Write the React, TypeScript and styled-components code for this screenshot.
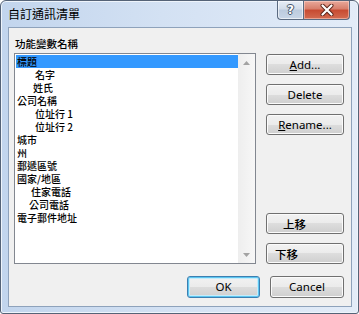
import React from 'react';
import styled, { createGlobalStyle, css } from 'styled-components';

const Global = createGlobalStyle`
  html, body { margin: 0; padding: 0; background: #ffffff; }
  body { width: 359px; height: 314px; overflow: hidden; }
  * { box-sizing: border-box; }
`;

const CJK = `"Noto Sans CJK TC", "Noto Sans", sans-serif`;
const UI = `"Noto Sans", "Noto Sans CJK TC", sans-serif`;

const Window = styled.div`
  width: 359px;
  height: 314px;
  border: 1px solid #556377;
  border-radius: 6px 6px 3px 3px;
  background: linear-gradient(to right, #c2d5ed 0%, #d3e1f3 45%, #e3ecf8 100%);
  display: flex;
  flex-direction: column;
  padding: 0 6px 6px 7px;
  box-shadow: inset 0 0 0 1px #eef4fb;
`;

const TitleBar = styled.div`
  height: 26px;
  display: flex;
  align-items: flex-start;
`;

const Title = styled.div`
  font-family: ${CJK};
  font-size: 12px;
  line-height: 14px;
  color: #000;
  padding: 6px 0 0 0;
  flex: 1;
`;

const CaptionGroup = styled.div`
  display: flex;
  margin-right: 2px;
  height: 19px;
`;

const CaptionButton = styled.div<{ $kind: 'help' | 'close' }>`
  height: 19px;
  display: flex;
  align-items: center;
  justify-content: center;
  border: 1px solid #5a6a80;
  border-top: none;
  ${(p) =>
    p.$kind === 'help'
      ? css`
          width: 26px;
          border-radius: 0 0 0 4px;
          border-right: none;
          background: linear-gradient(#e6edf6 0%, #d2dce9 45%, #bccbde 50%, #c8d6e7 100%);
          box-shadow: inset 0 0 0 1px rgba(255, 255, 255, 0.6);
        `
      : css`
          width: 47px;
          border-radius: 0 0 4px 0;
          background: linear-gradient(#e9a99b 0%, #d77d6a 45%, #c74a31 50%, #d36b50 100%);
          box-shadow: inset 0 0 0 1px rgba(255, 220, 210, 0.5);
        `}
`;

const HelpGlyph = styled.span`
  font-family: "DejaVu Sans", sans-serif;
  font-weight: bold;
  font-size: 12px;
  line-height: 12px;
  color: #ffffff;
  text-shadow: 0 0 1px #36465c, 1px 0 0 #4a5a70, -1px 0 0 #4a5a70, 0 1px 0 #4a5a70, 0 -1px 0 #4a5a70;
`;

const Client = styled.div`
  flex: 1;
  background: #f0f0f0;
  border: 1px solid #8ea2bb;
  display: flex;
  flex-direction: column;
`;

const FieldLabel = styled.div`
  font-family: ${CJK};
  font-size: 10.5px;
  font-weight: 500;
  line-height: 12px;
  color: #000;
  margin: 10px 0 3px 6px;
`;

const MainRow = styled.div`
  display: flex;
  gap: 10px;
  height: 211px;
  padding-left: 5px;
`;

const ListBox = styled.div`
  width: 242px;
  height: 211px;
  border: 1px solid #828790;
  background: #ffffff;
  display: flex;
`;

const Items = styled.div`
  flex: 1;
  padding: 1px 0 0 1px;
  display: flex;
  flex-direction: column;
`;

const Row = styled.div<{ $indent: number; $selected?: boolean }>`
  height: 13px;
  line-height: 13px;
  font-family: ${CJK};
  font-size: 10px;
  font-weight: 500;
  color: #000;
  padding-left: ${(p) => p.$indent}px;
  white-space: pre;
  overflow: hidden;
  background: ${(p) => (p.$selected ? '#3399ff' : 'transparent')};
`;

const ScrollBar = styled.div`
  width: 17px;
  background: linear-gradient(to right, #eeeeee, #f7f7f7);
  display: flex;
  flex-direction: column;
  justify-content: space-between;
`;

const ScrollArrow = styled.div`
  height: 17px;
  display: flex;
  align-items: center;
  justify-content: center;
`;

const ButtonColumn = styled.div`
  width: 78px;
  display: flex;
  flex-direction: column;
  justify-content: space-between;
`;

const ButtonGroup = styled.div<{ $top?: boolean }>`
  display: flex;
  flex-direction: column;
  gap: 9px;
  margin-top: ${(p) => (p.$top ? '1px' : '0')};
`;

const Button = styled.div<{ $pad?: number; $default?: boolean; $w?: number; $h?: number }>`
  width: ${(p) => (p.$w ? `${p.$w}px` : '100%')};
  height: ${(p) => p.$h ?? 21}px;
  border: 1px solid ${(p) => (p.$default ? '#3c7fb1' : '#707070')};
  border-radius: 3px;
  background: linear-gradient(#f2f2f2 0%, #ebebeb 50%, #dddddd 50%, #cfcfcf 100%);
  box-shadow: ${(p) =>
    p.$default ? 'inset 0 0 0 1px #5dc6f0, inset 0 0 0 2px #c5ecfb' : 'inset 0 0 0 1px #fbfbfb'};
  display: flex;
  align-items: center;
  justify-content: ${(p) => (p.$pad !== undefined ? 'flex-start' : 'center')};
  padding-left: ${(p) => p.$pad ?? 0}px;
  font-family: ${UI};
  font-size: 11.5px;
  color: #000;
  line-height: 14px;
`;

const CjkLabel = styled.span`
  font-family: ${CJK};
  font-size: 11.5px;
  font-weight: 500;
`;

const Footer = styled.div`
  display: flex;
  justify-content: flex-end;
  gap: 10px;
  margin-top: 12px;
  padding-right: 7px;
`;

const rows: { text: string; indent: number; selected?: boolean }[] = [
  { text: '標題', indent: 1, selected: true },
  { text: '名字', indent: 19 },
  { text: '姓氏', indent: 17 },
  { text: '公司名稱', indent: 1 },
  { text: '位址行 1', indent: 19 },
  { text: '位址行 2', indent: 19 },
  { text: '城市', indent: 1 },
  { text: '州', indent: 1 },
  { text: '郵遞區號', indent: 1 },
  { text: '國家/地區', indent: 1 },
  { text: '住家電話', indent: 15 },
  { text: '公司電話', indent: 13 },
  { text: '電子郵件地址', indent: 1 },
];

const Arrow = ({ up }: { up?: boolean }) => (
  <svg width="7" height="4" viewBox="0 0 7 4">
    <path d={up ? 'M0 4 L3.5 0 L7 4 Z' : 'M0 0 L3.5 4 L7 0 Z'} fill="#a3a3a3" />
  </svg>
);

const CloseIcon = () => (
  <svg width="14" height="12" viewBox="0 0 14 12">
    <path d="M2.5 1.5 L11.5 10.5 M11.5 1.5 L2.5 10.5" stroke="#5a2318" strokeWidth="4" strokeLinecap="round" />
    <path d="M2.5 1.5 L11.5 10.5 M11.5 1.5 L2.5 10.5" stroke="#ffffff" strokeWidth="2.2" strokeLinecap="round" />
  </svg>
);

export default function App() {
  return (
    <>
      <Global />
      <Window>
        <TitleBar>
          <Title>自訂通訊清單</Title>
          <CaptionGroup>
            <CaptionButton $kind="help">
              <HelpGlyph>?</HelpGlyph>
            </CaptionButton>
            <CaptionButton $kind="close">
              <CloseIcon />
            </CaptionButton>
          </CaptionGroup>
        </TitleBar>
        <Client>
          <FieldLabel>功能變數名稱</FieldLabel>
          <MainRow>
            <ListBox>
              <Items>
                {rows.map((r) => (
                  <Row key={r.text} $indent={r.indent} $selected={r.selected}>
                    {r.text}
                  </Row>
                ))}
              </Items>
              <ScrollBar>
                <ScrollArrow>
                  <Arrow up />
                </ScrollArrow>
                <ScrollArrow>
                  <Arrow />
                </ScrollArrow>
              </ScrollBar>
            </ListBox>
            <ButtonColumn>
              <ButtonGroup $top>
                <Button>
                  <span>
                    <u>A</u>dd...
                  </span>
                </Button>
                <Button>Delete</Button>
                <Button>
                  <span>
                    <u>R</u>ename...
                  </span>
                </Button>
              </ButtonGroup>
              <ButtonGroup>
                <Button $pad={16}>
                  <CjkLabel>上移</CjkLabel>
                </Button>
                <Button $pad={8}>
                  <CjkLabel>下移</CjkLabel>
                </Button>
              </ButtonGroup>
            </ButtonColumn>
          </MainRow>
          <Footer>
            <Button $default $w={73} $h={22}>
              OK
            </Button>
            <Button $w={74} $h={22}>
              Cancel
            </Button>
          </Footer>
        </Client>
      </Window>
    </>
  );
}
